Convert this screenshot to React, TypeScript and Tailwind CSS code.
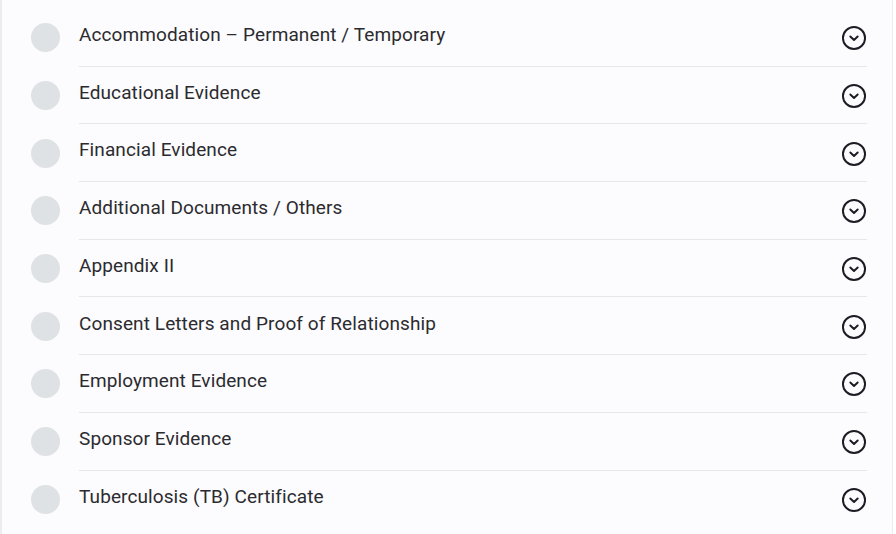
const items = [
  "Accommodation – Permanent / Temporary",
  "Educational Evidence",
  "Financial Evidence",
  "Additional Documents / Others",
  "Appendix II",
  "Consent Letters and Proof of Relationship",
  "Employment Evidence",
  "Sponsor Evidence",
  "Tuberculosis (TB) Certificate",
];

const ChevronCircle = () => (
  <svg width="26" height="26" viewBox="0 0 24 24" fill="none" stroke="currentColor" strokeWidth="1.8" strokeLinecap="round" strokeLinejoin="round">
    <circle cx="12" cy="12" r="10.2" />
    <path d="m8.6 10.6 3.4 3.2 3.4-3.2" />
  </svg>
);

export default function App() {
  return (
    <div className="min-h-screen w-full bg-white" style={{ fontFamily: "Roboto, 'Liberation Sans', sans-serif" }}>
      <div className="w-[893px] h-[534px] bg-[#fcfbfd] border-l-2 border-r border-[#ececf0] pt-[9px]">
        {items.map((label, i) => (
          <div key={label} className="flex items-center h-[57.7px] pl-[29px]">
            <div className="w-[29px] h-[29px] rounded-full bg-[#dfe2e5] shrink-0" />
            <div
              className={`flex items-center h-full ml-[19px] w-[788px] pr-[1px] ${
                i < items.length - 1 ? "border-b border-[#e7e6ea]" : ""
              }`}
            >
              <span className="flex-1 text-[19px] tracking-[0.1px] text-[#2b2b2f] -mt-[4px]">{label}</span>
              <span className="text-[#1b1c24] mr-[-1px] mt-[2px]">
                <ChevronCircle />
              </span>
            </div>
          </div>
        ))}
      </div>
    </div>
  );
}
